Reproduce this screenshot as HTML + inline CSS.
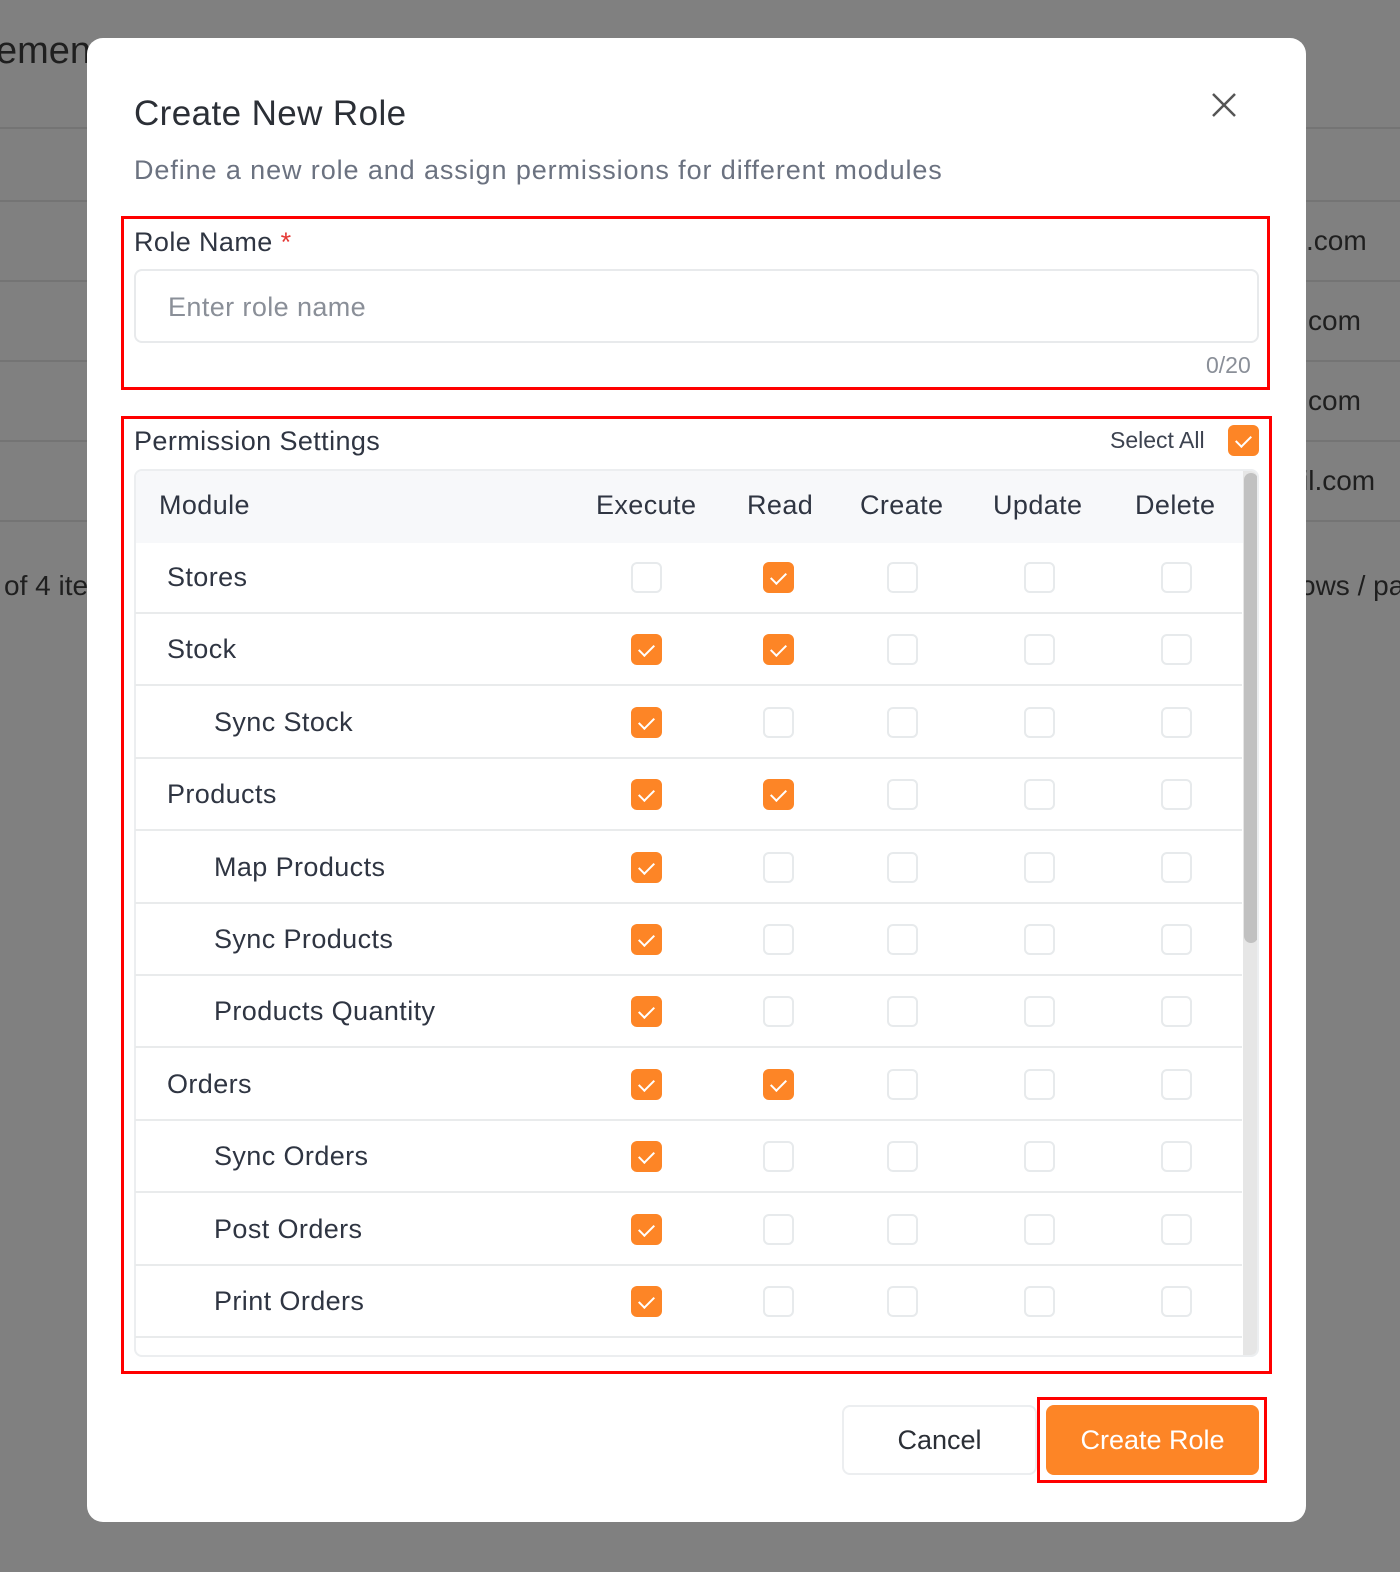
<!DOCTYPE html>
<html><head><meta charset="utf-8"><style>
*{box-sizing:border-box;margin:0;padding:0}
body{width:1400px;height:1572px;background:#808080;position:relative;overflow:hidden;font-family:"Liberation Sans",sans-serif;color:#374151}
.bg{position:absolute;color:#1f1f1f;font-size:28px;white-space:nowrap}
.hl{position:absolute;height:2px;background:#747474;left:0;width:1400px}
.modal{position:absolute;left:87px;top:38px;width:1219px;height:1484px;background:#fff;border-radius:16px}
.abs{position:absolute;white-space:nowrap}
.red{position:absolute;border:3px solid #f00}
.cb{position:absolute;width:31px;height:31px;border-radius:6px;border:2px solid #e7eaec;background:#fff}
.cb.on{background:#fd8526;border-color:#fd8526}
.cb.on::after{content:"";position:absolute;left:9px;top:5px;width:7px;height:13px;border:solid #fff;border-width:0 2.5px 2.5px 0;transform:rotate(45deg)}
.row{position:absolute;left:135px;width:1107px;height:72px;border-bottom:2px solid #e9ebec}
.lbl{position:absolute;font-size:27px;color:#2f3542;letter-spacing:0.4px;white-space:nowrap}
</style></head><body>
<div class="bg" style="left:-4px;top:30px;font-size:38px">emen</div>
<div class="hl" style="top:127px"></div><div class="hl" style="top:200px"></div><div class="hl" style="top:280px"></div><div class="hl" style="top:360px"></div><div class="hl" style="top:440px"></div><div class="hl" style="top:520px"></div>
<div class="bg" style="left:1306px;top:225px">.com</div>
<div class="bg" style="left:1308px;top:305px">com</div>
<div class="bg" style="left:1308px;top:385px">com</div>
<div class="bg" style="left:1302px;top:465px">il.com</div>
<div class="bg" style="left:4px;top:570px">of 4 ite</div>
<div class="bg" style="left:1300px;top:570px">ows / pa</div>
<div class="modal"></div>
<div class="abs" style="left:134px;top:94px;font-size:35px;color:#2b2f36;letter-spacing:0.4px">Create New Role</div>
<svg class="abs" style="left:1210px;top:91px" width="28" height="28"><path d="M3 3L25 25M25 3L3 25" stroke="#555" stroke-width="2.5"/></svg>
<div class="abs" style="left:134px;top:155px;font-size:27px;color:#6b7280;letter-spacing:0.9px">Define a new role and assign permissions for different modules</div>
<div class="red" style="left:121px;top:216px;width:1149px;height:174px"></div>
<div class="abs" style="left:134px;top:227px;font-size:27px;color:#2f3542;letter-spacing:0.4px">Role Name <span style="color:#e53935">*</span></div>
<div class="abs" style="left:134px;top:269px;width:1125px;height:74px;border:2px solid #e8eaec;border-radius:8px;font-size:27px;color:#8a8f98;padding:21px 0 0 32px;letter-spacing:0.4px">Enter role name</div>
<div class="abs" style="left:1206px;top:352px;font-size:23px;color:#8a8f98">0/20</div>
<div class="red" style="left:121px;top:416px;width:1151px;height:958px"></div>
<div class="abs" style="left:134px;top:426px;font-size:27px;color:#2f3542;letter-spacing:0.4px">Permission Settings</div>
<div class="abs" style="left:1110px;top:427px;font-size:23px;color:#3d4350">Select All</div>
<div class="cb on" style="left:1228px;top:425px"></div>
<div class="abs" style="left:134px;top:469px;width:1125px;height:888px;border:2px solid #eceef0;border-radius:8px;overflow:hidden">
<div class="abs" style="left:0;top:0;width:1107px;height:72px;background:#f7f8fa"></div>
<div class="abs" style="left:1107px;top:0;width:16px;height:888px;background:#e6e6e6"></div>
<div class="abs" style="left:1108px;top:2px;width:14px;height:470px;background:#c1c1c1;border-radius:7px"></div>
</div>
<div class="lbl" style="left:159px;top:490px">Module</div>
<div class="lbl" style="left:596px;top:490px">Execute</div>
<div class="lbl" style="left:747px;top:490px">Read</div>
<div class="lbl" style="left:860px;top:490px">Create</div>
<div class="lbl" style="left:993px;top:490px">Update</div>
<div class="lbl" style="left:1135px;top:490px">Delete</div>
<div id="rows"></div>
<div class="abs" style="left:842px;top:1405px;width:195px;height:70px;border:2px solid #eceef0;border-radius:8px;font-size:27px;color:#2b2f36;text-align:center;line-height:66px">Cancel</div>
<div class="red" style="left:1037px;top:1397px;width:230px;height:86px"></div>
<div class="abs" style="left:1046px;top:1405px;width:213px;height:70px;background:#fd8526;border-radius:8px;font-size:27px;color:#fff;text-align:center;line-height:70px">Create Role</div>
<script>
var rows=[["Stores",0,0,1],["Stock",0,1,1],["Sync Stock",1,1,0],["Products",0,1,1],["Map Products",1,1,0],["Sync Products",1,1,0],["Products Quantity",1,1,0],["Orders",0,1,1],["Sync Orders",1,1,0],["Post Orders",1,1,0],["Print Orders",1,1,0]];
var xs=[631,763,887,1024,1161],h="";
rows.forEach(function(r,i){var t=542+i*72.4;
h+='<div class="row" style="top:'+t+'px"></div><div class="lbl" style="left:'+(r[1]?214:167)+'px;top:'+(t+20)+'px">'+r[0]+'</div>';
xs.forEach(function(x,j){var on=(j==0&&r[2])||(j==1&&r[3]);h+='<div class="cb'+(on?' on':'')+'" style="left:'+x+'px;top:'+(t+20)+'px"></div>';});});
document.getElementById("rows").innerHTML=h;
</script>
</body></html>
